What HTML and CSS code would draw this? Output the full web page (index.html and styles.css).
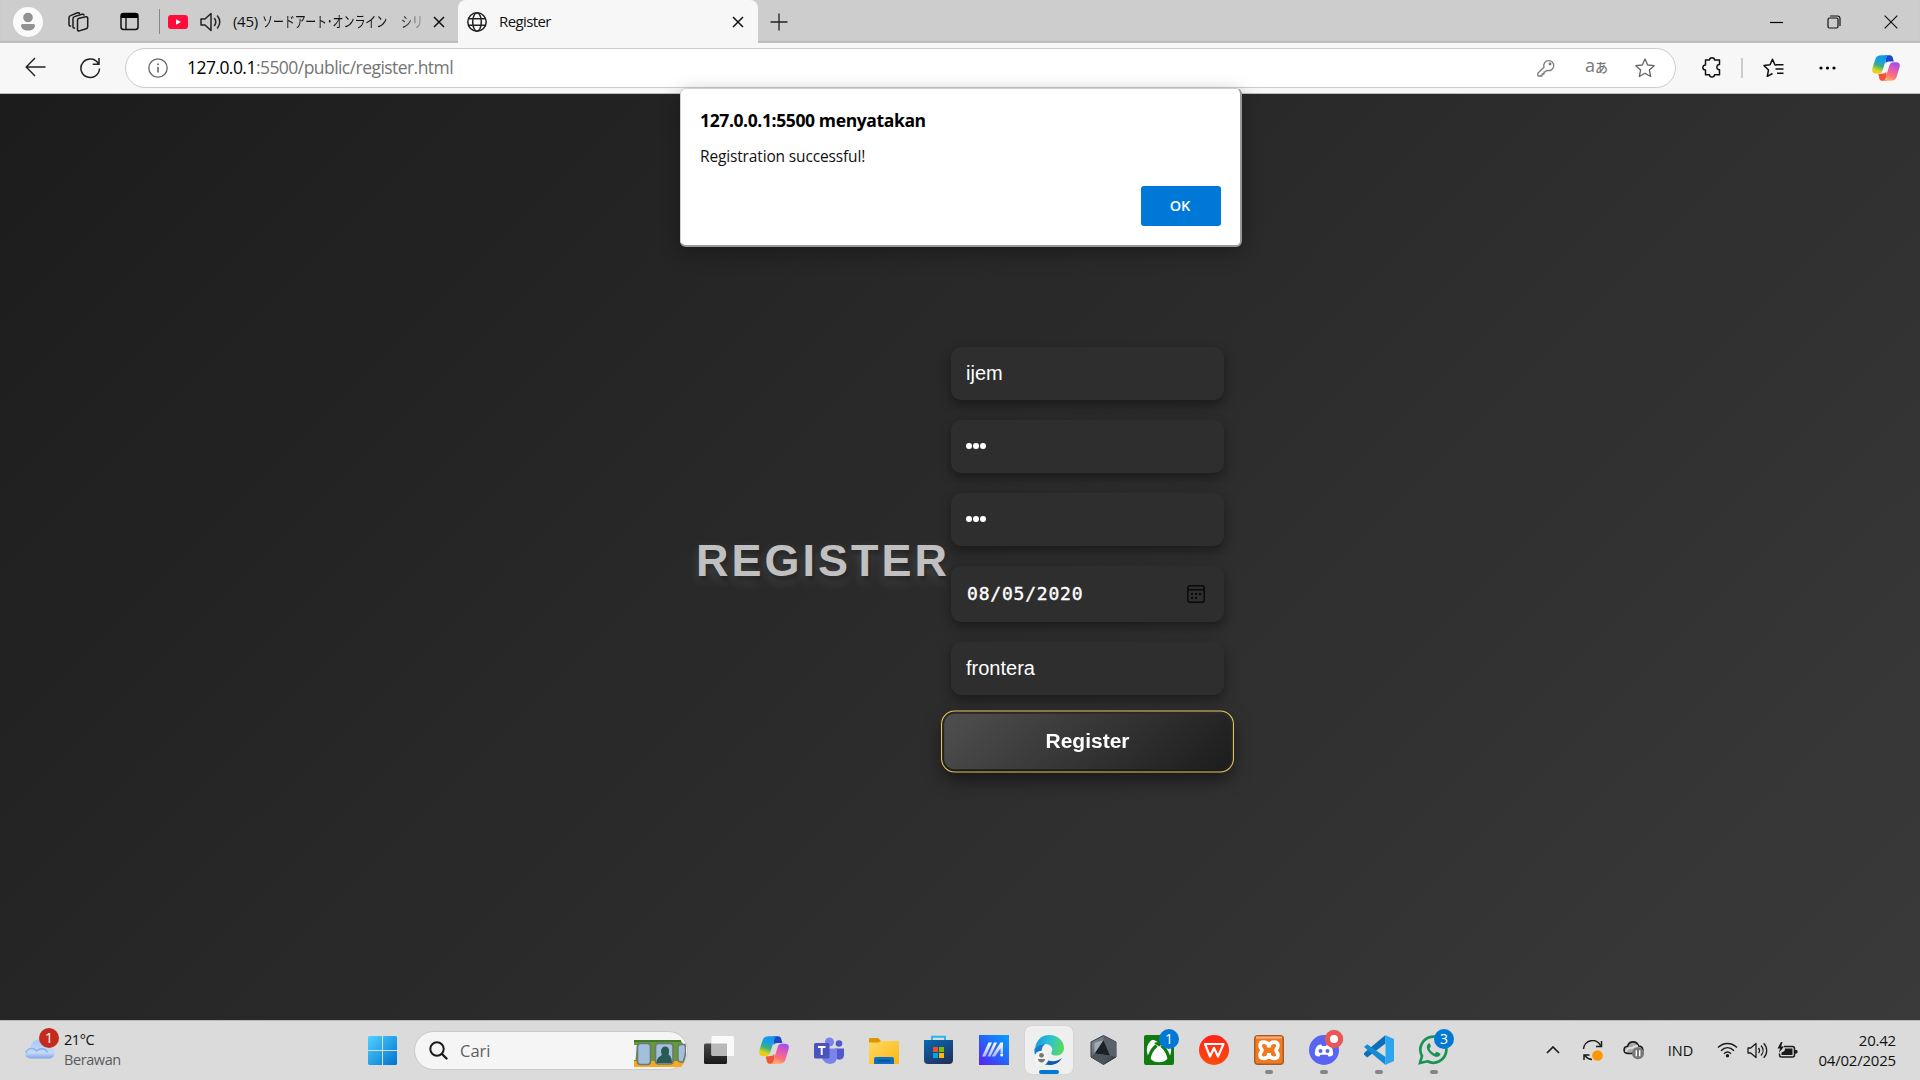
FILE: index.html
```html
<!DOCTYPE html>
<html lang="id">
<head>
<meta charset="utf-8">
<title>Register</title>
<link rel="stylesheet" href="styles.css">
</head>
<body>
<svg width="0" height="0" class="defs" aria-hidden="true">
  <defs>
    <linearGradient id="cpA" x1=".6" y1="0" x2=".3" y2="1"><stop offset="0" stop-color="#1594ea"/><stop offset=".3" stop-color="#12a0e8"/><stop offset=".58" stop-color="#3fb07a"/><stop offset=".85" stop-color="#d9d422"/><stop offset="1" stop-color="#fbc60e"/></linearGradient>
    <linearGradient id="cpB" x1=".7" y1="0" x2=".35" y2="1"><stop offset="0" stop-color="#a04df0"/><stop offset=".4" stop-color="#e35bb0"/><stop offset=".7" stop-color="#fb6f7c"/><stop offset="1" stop-color="#ffb067"/></linearGradient>
    <linearGradient id="winG" x1="0" y1="0" x2="1" y2="1"><stop offset="0" stop-color="#4fd3ff"/><stop offset="1" stop-color="#0071d0"/></linearGradient>
    <symbol id="copilot" viewBox="0 0 30 28">
      <path d="M14 .3h5c1.800 0 2.700.8 3.200 2.500l1.200 4.200h-5.200c-2 0-3 .8-3.500 2.500z" fill="#1b48c8"/>
      <path d="M16 27.700h-5c-1.800 0-2.700-.8-3.200-2.500l-1-4.700 5-.5c2 0 3-.8 3.500-2.500z" fill="#f0523a"/>
      <path d="M10 .3h8.500c-1.700.2-2.400 1.200-3 3l-4 12.500c-1 3-2 4.200-5 4.200H3.800C.8 20-.5 17.500.4 14.300L3.500 4.500C4.500 1.500 6.500.3 10 .3z" fill="url(#cpA)"/>
      <path d="M20 27.700h-8.500c1.700-.2 2.400-1.200 3-3l4-13c1-3 2-3.900 5-3.900h2.700c3 0 4.300 2.200 3.400 5.400l-3.100 10.300c-1 3-3 4.200-6.500 4.200z" fill="url(#cpB)"/>
    </symbol>
    <symbol id="cross" viewBox="0 0 12 12"><path d="M1 1l10 10M11 1L1 11" fill="none" stroke="currentColor" stroke-width="1.500"/></symbol>
  </defs>
</svg>

<header class="tabstrip">
  <div class="slot avatar-slot"><svg width="30" height="30" viewBox="0 0 30 30"><circle cx="15" cy="15" r="15" fill="#fafafa"/><circle cx="15" cy="10.500" r="4.800" fill="#929292"/><path d="M8 18.500c0-1 .8-1.500 1.800-1.500h10.400c1 0 1.800.5 1.800 1.500 0 3-3 5-7 5s-7-2-7-5z" fill="#929292"/></svg></div>
  <div class="slot collections"><svg width="22" height="22" viewBox="0 0 22 22" fill="none" stroke="#1b1b1b" stroke-width="1.500" stroke-linejoin="round" stroke-linecap="round"><path d="M10.500 9.200c0-1 .5-1.600 1.500-1.900l7-1.500c1.200-.2 1.700.5 1.700 1.500v8.500c0 1-.5 1.600-1.500 1.900l-7 2.200c-1.200.3-1.700-.5-1.700-1.500z"/><path d="M7.500 17c-1 .2-1.500-.5-1.500-1.500V7.500c0-1 .5-1.600 1.500-1.900L15 3.300c1-.3 1.800 0 2 .8M3.700 15c-1 .2-1.700-.5-1.700-1.500v-7c0-1 .5-1.600 1.500-1.900L10.500 1.800c1-.3 1.800 0 2 .6"/></svg></div>
  <div class="slot workspace"><svg width="19" height="19" viewBox="0 0 19 19"><rect x="1" y="1.500" width="17" height="16" rx="2.500" fill="none" stroke="#111" stroke-width="1.500"/><path d="M1 6V3.500C1 2 2 1 3.500 1h12C17 1 18 2 18 3.500V6z" fill="#000"/><path d="M6 6v11" stroke="#111" stroke-width="1.400"/></svg></div>
  <span class="strip-divider"></span>
  <div class="tab tab-video">
    <svg class="yt" width="20" height="14" viewBox="0 0 20 14"><rect width="20" height="14" rx="3" fill="#ff0c3a"/><path d="M8 4.200v5.600L13 7z" fill="#fff"/></svg>
    <svg class="snd" width="22" height="20" viewBox="0 0 22 20" fill="none" stroke="#222" stroke-width="1.500" stroke-linejoin="round" stroke-linecap="round"><path d="M1 7v6h4l6 5.500v-17L5 7zM14.500 6.500c1.500 2 1.500 5 0 7M17.500 4c3 3.500 3 8.500 0 12"/></svg>
    <span class="tab-title count">(45)</span>
    <span class="tab-title kana">ソードアート･オンライン</span>
    <span class="tab-title kana kana-fade">シリ</span>
    <svg class="tab-close" width="12" height="12"><use href="#cross"/></svg>
  </div>
  <div class="tab tab-active">
    <svg width="20" height="20" viewBox="0 0 20 20" fill="none" stroke="#222" stroke-width="1.500"><circle cx="10" cy="10" r="9.200"/><ellipse cx="10" cy="10" rx="4.300" ry="9.200"/><path d="M1.500 6.700h17M1.500 13.300h17"/></svg>
    <span class="tab-title">Register</span>
    <svg class="tab-close" width="12" height="12"><use href="#cross"/></svg>
  </div>
  <svg class="newtab" width="18" height="18" viewBox="0 0 18 18" stroke="#222" stroke-width="1.300"><path d="M9 .5v17M.5 9h17"/></svg>
  <div class="window-buttons">
    <svg width="13" height="14" viewBox="0 0 13 14"><path d="M0 7.500h13" stroke="#000" stroke-width="1.200"/></svg>
    <svg width="14" height="14" viewBox="0 0 14 14" fill="none" stroke="#111" stroke-width="1.200"><rect x="1" y="3" width="10" height="10" rx="1.500"/><path d="M3 1h7.500A2.500 2.500 0 0 1 13 3.500V11"/></svg>
    <svg width="14" height="14" viewBox="0 0 14 14"><path d="M.7.7l12.600 12.600M13.300.7L.7 13.300" stroke="#111" stroke-width="1.200"/></svg>
  </div>
</header>

<nav class="toolbar">
  <svg class="back" width="21" height="20" viewBox="0 0 21 20" fill="none" stroke="#222" stroke-width="1.400"><path d="M10 1L1.200 10l8.800 9M1.200 10H20.500"/></svg>
  <svg class="reload" width="22" height="22" viewBox="0 0 22 22" fill="none" stroke="#222" stroke-width="1.500"><path d="M19.500 7A9.300 9.300 0 1 0 20.500 11.500M20 1v6.300h-6.300"/></svg>
  <div class="address">
    <svg class="info" width="20" height="20" viewBox="0 0 20 20" fill="none" stroke="#666" stroke-width="1.300"><circle cx="10" cy="10" r="9.200"/><path d="M10 9v5.500M10 5.500v1.700" stroke-width="1.600"/></svg>
    <span class="url"><b>127.0.0.1</b>:5500/public/register.html</span>
    <svg class="key" width="18" height="18" viewBox="0 0 18 18" fill="none" stroke="#7a7a7a" stroke-width="1.300" stroke-linejoin="round"><path d="M7 8.200A5 5 0 1 1 10 11.300l-1.500 1.500H7V15H5v2H1.500C.8 17 .8 16.500.8 16v-1.800z"/><circle cx="13" cy="5" r=".8" fill="#7a7a7a"/></svg>
    <span class="translate"><span>a</span><small>あ</small></span>
    <svg class="star" width="20" height="20" viewBox="0 0 20 20" fill="none" stroke="#666" stroke-width="1.300" stroke-linejoin="round"><path d="M10 1l2.700 6 6.500.7-4.800 4.400 1.300 6.400L10 15.300l-5.700 3.200 1.300-6.400L.8 7.700 7.300 7z"/></svg>
  </div>
  <svg class="ext" width="20" height="21" viewBox="0 0 20 21" fill="none" stroke="#111" stroke-width="1.500" stroke-linejoin="round"><path d="M7.500 3c0-3 5-3 5 0h5v4.500c-3.500-.3-3.500 5.500 0 5.200v5h-5c0 3-5 3-5 0h-4v-4.700c-3.500 0-3.500-5 0-5V3z"/></svg>
  <span class="bar-divider"></span>
  <svg class="favs" width="21" height="20" viewBox="0 0 21 20" fill="none" stroke="#111" stroke-width="1.500" stroke-linejoin="round"><path d="M13.500 7l-1.500 0L9.500 1.200 7 6.800l-6 .8L5.500 12l-1.200 6.300 5.200-2.800M13 6.800h7.500M12.500 11h8M14 15.300h6.500"/></svg>
  <svg class="dots" width="17" height="4" viewBox="0 0 17 4"><circle cx="2" cy="2" r="1.600"/><circle cx="8.500" cy="2" r="1.600"/><circle cx="15" cy="2" r="1.600"/></svg>
  <svg class="copilot-top" width="28" height="26"><use href="#copilot"/></svg>
</nav>

<main class="page">
  <h1 class="heading">REGISTER</h1>
  <form class="form">
    <div class="field">ijem</div>
    <div class="field dots-field"><i></i><i></i><i></i></div>
    <div class="field dots-field"><i></i><i></i><i></i></div>
    <div class="field date-field"><span>08/05/2020</span>
      <svg width="18" height="18" viewBox="0 0 18 18"><rect x=".8" y=".8" width="16.400" height="16.400" rx="2.200" fill="none" stroke="#080808" stroke-width="1.400"/><path d="M1 4.800h16" stroke="#080808" stroke-width="1.400"/><path d="M4 8h2v2H4zM8 8h2v2H8zM12 8h2v2h-2zM4 12h2v2H4zM8 12h2v2H8z" fill="#080808"/></svg>
    </div>
    <div class="field">frontera</div>
    <button type="button" class="submit">Register</button>
  </form>
</main>

<div class="dialog">
  <p class="dialog-title">127.0.0.1:5500 menyatakan</p>
  <p class="dialog-text">Registration successful!</p>
  <button type="button" class="ok">OK</button>
</div>

<footer class="taskbar">
  <div class="weather">
    <div class="cloud">
      <svg width="30" height="20" viewBox="0 0 30 20"><defs><linearGradient id="cl" x1="0" y1="0" x2="0" y2="1"><stop offset="0" stop-color="#a9c6f6"/><stop offset=".7" stop-color="#c6daf8"/><stop offset="1" stop-color="#7fa5e6"/></linearGradient></defs><path d="M6 19.500c-7.500 0-8-9.500-.5-10C6-1.500 20-3 22 6c9 0 10.500 13.500 2 13.500z" fill="url(#cl)"/><path d="M1 14c1-5 8-6 10.500-2 4-3.500 9-3 11 1.500" fill="none" stroke="#8bb0ef" stroke-width="1.500"/></svg>
      <span class="badge red">1</span>
    </div>
    <div class="weather-text"><span>21°C</span><span class="muted">Berawan</span></div>
  </div>
  <svg class="start" width="29" height="29" viewBox="0 0 29 29"><path d="M1 0h13v14H0V1zM15 0h13l1 1v13H15zM0 15h14v14H1l-1-1zM15 15h14v13l-1 1H15z" fill="url(#winG)"/></svg>
  <div class="search">
    <svg width="19" height="19" viewBox="0 0 19 19" fill="none" stroke="#1b1b1b" stroke-width="2" stroke-linecap="round"><circle cx="8" cy="8" r="6.700"/><path d="M13 13l4.500 4.500" stroke-width="2.400"/></svg>
    <span>Cari</span>
    <svg class="art" width="52" height="27" viewBox="0 0 52 27">
      <path d="M0 0h46c3 3 5.500 7 5.500 13S49 24 46 27H0z" fill="#659b32"/><path d="M0 1h47" stroke="#3f7c2a" stroke-width="2"/><path d="M0 21h51l-4 6H0z" fill="#f6a821"/><path d="M0 5h3L1.500 20H0z" fill="#eef2f4"/>
      <rect x="3.500" y="3.500" width="13" height="21" rx="3" fill="#a2bfdc" stroke="#6f7478" stroke-width="1.600"/><rect x="21.500" y="3.500" width="17.500" height="20.500" rx="3" fill="#a2bfdc" stroke="#6f7478" stroke-width="1.600"/><path d="M51 4.500h-4c-2 0-3 1-3 3V19c0 2 1 3 3 3h2c3-6 3-12 2-17.500z" fill="#a2bfdc" stroke="#6f7478" stroke-width="1.400"/>
      <path d="M22.500 23c0-4 2-6 5.500-8-2-4-.5-8.500 3-8.500s5 3 3.500 8c2.500 1.500 3.500 5 3.500 8.500z" fill="#285b55"/>
    </svg>
  </div>
  <div class="apps">
    <div class="app"><svg width="30" height="28" viewBox="0 0 30 28"><defs><linearGradient id="tv" x1="0" y1="0" x2="0" y2="1"><stop offset="0" stop-color="#4a4a4a"/><stop offset="1" stop-color="#191919"/></linearGradient></defs><rect y="7.500" width="23" height="20.500" rx="1.500" fill="url(#tv)"/><rect x="7.500" width="22.500" height="20" rx="1.500" fill="#fafafa"/><path d="M7.500 7.500H23V20H9q-1.500 0-1.500-1.500z" fill="#b9b9b9"/></svg></div>
    <div class="app"><svg width="30" height="28"><use href="#copilot"/></svg></div>
    <div class="app"><svg width="30" height="27" viewBox="0 0 30 27"><circle cx="15.500" cy="5" r="4.500" fill="#7b83eb"/><circle cx="25" cy="6.500" r="3.300" fill="#5059c9"/><path d="M21 11.500h9V18c0 6-8 6-9 1z" fill="#5059c9"/><path d="M8 11.500h15V20c0 8.500-12 9.500-15 1z" fill="#7b83eb"/><rect y="6" width="15.500" height="15.500" rx="1.500" fill="#4b53bc"/><path d="M4 10h7.500M7.700 10v8" stroke="#fff" stroke-width="1.900"/></svg></div>
    <div class="app"><svg width="30" height="27" viewBox="0 0 30 27"><defs><linearGradient id="fo" x1="0" y1="0" x2="1" y2="1"><stop offset="0" stop-color="#ffd766"/><stop offset="1" stop-color="#fdb90f"/></linearGradient></defs><path d="M0 10V2Q0 1 1.200 1h8L12 4v5z" fill="#dc9700"/><path d="M0 5.500h9.500L12 4h17q1 0 1 1v21q0 1-1 1H1q-1 0-1-1z" fill="url(#fo)"/><path d="M5 27v-5q0-2 2-2h16q2 0 2 2v5z" fill="#0b6fc4"/><path d="M8.500 23.700h13" stroke="#084d8c" stroke-width="1.600"/></svg></div>
    <div class="app"><svg width="29" height="30" viewBox="0 0 29 30"><defs><linearGradient id="st" x1="0" y1="0" x2=".6" y2="1"><stop offset="0" stop-color="#0767b5"/><stop offset="1" stop-color="#1f3561"/></linearGradient></defs><path d="M8 6V1.800h13V6" fill="none" stroke="#29b4f0" stroke-width="1.900"/><path d="M0 5h29v20q0 4-4 4H4q-4 0-4-4z" fill="url(#st)"/><path fill="#f25022" d="M9 12h5v5H9z"/><path fill="#7fba00" d="M15 12h5v5h-5z"/><path fill="#00a4ef" d="M9 18h5v5H9z"/><path fill="#ffb900" d="M15 18h5v5h-5z"/></svg></div>
    <div class="app"><svg width="30" height="30" viewBox="0 0 30 30"><defs><linearGradient id="my" x1="1" y1="0" x2="0" y2="1"><stop offset="0" stop-color="#06a0ff"/><stop offset=".5" stop-color="#2563fb"/><stop offset="1" stop-color="#5c1ff2"/></linearGradient><linearGradient id="mw" x1="0" y1="0" x2="0" y2="1"><stop offset="0" stop-color="#fff"/><stop offset="1" stop-color="#a9b4f6"/></linearGradient></defs><path d="M0 0h30v30H0z" fill="url(#my)"/><path d="M3 21.500L9.500 7.500H13L6.500 21.500zM8.500 21.500L15 7.500h3L11.500 21.500zM12.500 21.500L21.500 7.500h2.500v11h-2.500v-5l-5.500 8z" fill="url(#mw)"/><circle cx="22.700" cy="20" r="1.500" fill="#fff"/></svg></div>
    <div class="app current"><svg width="30" height="31" viewBox="0 0 30 31"><defs><linearGradient id="ea" x1="0" y1=".3" x2="1" y2=".5"><stop offset="0" stop-color="#129bdc"/><stop offset=".5" stop-color="#2bc3d2"/><stop offset="1" stop-color="#5bdb57"/></linearGradient><linearGradient id="eb" x1="0" y1="0" x2="1" y2="1"><stop offset="0" stop-color="#1389d8"/><stop offset="1" stop-color="#0b4f9d"/></linearGradient></defs><path d="M1 13C3 4 8 0 15 0c9 0 15 6 15 13 0 5-3.500 7.500-8 7.500-3.500 0-5.500-1.500-4.500-3 2.500-4-1-8.500-6-8.500C7 9 3 10.500 1 13z" fill="url(#ea)"/><path d="M.5 14C3 10 7 9 11 9c-4 3-4.500 9-1 13 4 5 11 6 18 1-2.500 4.500-7 7-12.500 7C5.500 30-.5 22.500.5 14z" fill="url(#eb)"/><circle cx="7.500" cy="23" r="7.300" fill="#f3f3f3"/><circle cx="7.500" cy="20.300" r="2.400" fill="#777"/><path d="M4 24h7c0 4.500-7 4.500-7 0z" fill="#777"/></svg></div>
    <div class="app"><svg width="27" height="30" viewBox="0 0 27 30"><defs><linearGradient id="hx" x1="0" y1="0" x2="1" y2="1"><stop offset="0" stop-color="#8a949e"/><stop offset="1" stop-color="#30353a"/></linearGradient></defs><path d="M13.500.5L26 7v15l-12.500 7.500L1 22V7z" fill="url(#hx)" stroke="#34383c"/><path d="M13.500 5L20 20.500 4.500 18.500z" fill="#1d2024"/><path d="M13.500 5L4.500 18.500V8z" fill="#a0abb7"/><path d="M13.500 1l.5 5L20 20.500 26 22V7z" fill="#59626c"/><path d="M1 22l3.500-3.500L20 20.500l-6.500 9z" fill="#4d545c"/></svg></div>
    <div class="app"><svg width="30" height="30" viewBox="0 0 30 30"><rect width="30" height="30" rx="2" fill="#107c10"/><circle cx="15" cy="15" r="12.200" fill="#fff"/><path d="M6.500 5C9 4 12.500 6 15 8 17.500 6 21 4 23.500 5L22 1H8z" fill="#107c10"/><path d="M12.500 10.500C8.500 14 5.500 19 4.800 24.500M17.500 10.500C21.500 14 24.500 19 25.200 24.500" fill="none" stroke="#107c10" stroke-width="3.200"/><path d="M10 8l5 3.500L20 8l-5-1.500z" fill="#107c10"/></svg><span class="badge blue">1</span></div>
    <div class="app"><svg width="30" height="30" viewBox="0 0 30 30"><defs><linearGradient id="wp" x1="0" y1="0" x2="0" y2="1"><stop offset="0" stop-color="#ff2219"/><stop offset="1" stop-color="#ff4c0c"/></linearGradient></defs><circle cx="15" cy="15" r="15" fill="url(#wp)"/><path d="M12 9H6l5 12.500L15 13l4 8.500L24.500 9H11" fill="none" stroke="#fff" stroke-width="2.200" stroke-linejoin="round"/></svg></div>
    <div class="app running"><svg width="30" height="30" viewBox="0 0 30 30"><rect x=".7" y=".7" width="28.600" height="28.600" rx="3" fill="#ef7a22" stroke="#a85a22" stroke-width="1.400"/><path d="M2 2.500h26" stroke="#f8b17f" stroke-width="2"/><path d="M15 10.500C13 6 6 6 6 10.500c0 2.500 2 3.300 2 4.700s-2 2.300-2 4.800c0 4.500 7 4.500 9 0 2 4.500 9 4.500 9 0 0-2.500-2-3.400-2-4.800s2-2.200 2-4.700c0-4.500-7-4.500-9 0z" fill="none" stroke="#fff" stroke-width="3.600" stroke-linejoin="round"/><path d="M15 9v3.500M15 18v3.500" stroke="#fff" stroke-width="4"/></svg></div>
    <div class="app running"><svg width="30" height="30" viewBox="0 0 30 30"><circle cx="15" cy="15" r="15" fill="#5865f2"/><path d="M6 20c-.5-4 1-8 2.800-9.500 1.500-1 3-1.300 3.500-1l.7 1.500h4l.7-1.500c.5-.3 2 0 3.500 1C23 12 24.500 16 24 20c-1.500 1.200-3 1.700-4.500 1.500l-1-1.800h-7l-1 1.800C9 21.700 7.500 21.200 6 20z" fill="#fff"/><circle cx="11.500" cy="16" r="2" fill="#5865f2"/><circle cx="18.500" cy="16" r="2" fill="#5865f2"/></svg><span class="badge rec"></span></div>
    <div class="app running"><svg width="30" height="30" viewBox="0 0 30 30"><path d="M21.500 0v8.500L3.200 22.500 0 19.500 0 18z" fill="#0c6fb8"/><path d="M0 12l3.200-2.700L21.500 22v8L0 12z" fill="#158bd7"/><path d="M21.500.3L30 4v22l-8.500 3.700z" fill="#2ba5ee"/></svg></div>
    <div class="app running"><svg width="31" height="30" viewBox="0 0 31 30"><path d="M2 28l2-7A13 13 0 1 1 9.500 26.300z" fill="none" stroke="#199256" stroke-width="2.700"/><path d="M11 8c-4 3-2 7.500 1.500 10.700C16.500 22.300 20.500 23 22.500 19.500c.4-1-3.500-3-4.300-2.500l-1.500 1.700c-2.500-1-4.300-2.900-5.200-5.200l1.300-1.700c.4-.8-.8-3.700-1.800-3.800z" fill="#199256"/></svg><span class="badge blue">3</span></div>
  </div>
  <div class="tray">
    <div class="tray-slot"><svg width="14" height="8" viewBox="0 0 14 8"><path d="M1 7l6-6 6 6" fill="none" stroke="#1b1b1b" stroke-width="1.700"/></svg></div>
    <div class="tray-slot"><svg width="22" height="21" viewBox="0 0 22 21" fill="none" stroke="#1b1b1b" stroke-width="1.500"><path d="M1.500 9A9 9 0 0 1 18.500 5.500M19.500 1v5.500H14M2 20v-5h5.500M3 15.500a9 9 0 0 0 7 4"/><circle cx="15.500" cy="15.500" r="5.300" fill="#ff9800" stroke="none"/></svg></div>
    <div class="tray-slot"><svg width="21" height="20" viewBox="0 0 21 20"><path d="M5.500 13.500c-6 0-5.500-7-.8-7.300C6 .5 14 .5 15.500 6c5 0 6 6.500 1 7.500z" fill="#a9a9a9" stroke="#1b1b1b" stroke-width="1.600"/><path d="M3 12c0-3 3-4.500 6-4 2-2 4-2 6-2" stroke="#ddd" stroke-width="2" fill="none"/><circle cx="15" cy="13.300" r="6" fill="#777"/><path d="M13.300 10.300v6M16.700 10.300v6" stroke="#fff" stroke-width="1.400"/></svg></div>
    <span class="lang">IND</span>
    <div class="status">
      <svg width="21" height="16" viewBox="0 0 21 16" fill="none" stroke="#1b1b1b" stroke-width="1.500"><path d="M1 5.500c5.500-5.500 13.500-5.500 19 0M4 8.700c4-4 9-4 13 0M7 11.700c2.200-2.200 4.800-2.200 7 0"/><circle cx="10.500" cy="13.800" r="1.700" fill="#1b1b1b" stroke="none"/></svg>
      <svg width="21" height="17" viewBox="0 0 21 17" fill="none" stroke="#1b1b1b" stroke-width="1.300" stroke-linejoin="round"><path d="M1 6v5h2.700L9 15.500v-14L3.700 6zM11.500 6c1.300 1.500 1.300 3.500 0 5M14 3.500c2.700 3 2.700 7 0 10M16.700 1.200c4 4 4 10.600 0 14.600"/></svg>
      <svg width="21" height="17" viewBox="0 0 21 17"><path d="M7 4.500h8.500q2 0 2 2V13q0 2-2 2H4.500q-2 0-2-2v-1.500" fill="none" stroke="#1b1b1b" stroke-width="1.500"/><path d="M8 6.500h7.500V13h-11v-2.500L7.500 9zM18 8h1.500q1 0 1 1v1.500q0 1-1 1H18zM4 0L.5 6.500H3L2 11l5-6.500H4.200L5.500 0z" fill="#1b1b1b"/></svg>
    </div>
    <div class="clock"><span>20.42</span><span>04/02/2025</span></div>
  </div>
</footer>
</body>
</html>
```
FILE: styles.css
```css
* { box-sizing: border-box; }
html, body { margin: 0; height: 100%; }
body {
  display: flex;
  flex-direction: column;
  height: 1080px;
  overflow: hidden;
  position: relative;
  font-family: "Open Sans", "Noto Sans", "Noto Sans CJK JP", sans-serif;
  color: #111;
}
svg { display: block; flex: none; }
p { margin: 0; }
.defs { position: absolute; }

/* Tab strip */
.tabstrip {
  display: flex;
  align-items: center;
  height: 43px;
  flex: none;
  background: #cdcdcd;
  box-shadow: inset 0 -2px 1px #bdbdbd;
}
.slot { display: flex; justify-content: center; }
.avatar-slot { width: 56px; }
.collections { width: 43px; }
.workspace { width: 60px; padding-left: 1px; }
.strip-divider { width: 1px; height: 25px; background: #888; }
.tab { display: flex; align-items: center; height: 43px; }
.tab-title { padding-bottom: 2px; font-size: 15px; letter-spacing: -0.6px; white-space: nowrap; line-height: 24px; }
.tab-video { width: 298px; padding: 0 13px 0 8px; }
.snd { margin-left: 12px; }
.count { width: 29px; margin-left: 11px; letter-spacing: -0.3px; }
.kana {
  width: 142px;
  font-family: "Noto Sans CJK JP", sans-serif;
  letter-spacing: 0;
  transform: scaleX(.73);
  transform-origin: left;
}
.kana-fade {
  width: 32px;
  margin-left: -3px;
  -webkit-mask-image: linear-gradient(90deg, #000, rgba(0, 0, 0, .2));
  mask-image: linear-gradient(90deg, #000, rgba(0, 0, 0, .2));
}
.tab-close { margin-left: auto; }
.tab-active {
  width: 300px;
  padding: 0 14px 0 9px;
  border-radius: 8px 8px 0 0;
  background: #f7f7f7;
}
.tab-active .tab-title { margin-left: 12px; }
.newtab { margin-left: 12px; }
.window-buttons { display: flex; gap: 43.5px; margin-left: auto; margin-right: 22px; }

/* Toolbar */
.toolbar {
  display: flex;
  align-items: center;
  height: 51px;
  flex: none;
  padding: 0 20px 1px 25px;
  background: #f7f7f7;
  border-bottom: 1px solid #bdbdbd;
}
.back { margin-bottom: 1px; }
.reload { margin-left: 33px; }
.address {
  display: flex;
  align-items: center;
  width: 1551px;
  height: 40px;
  margin-left: 24px;
  padding: 0 20px 0 22px;
  border: 1px solid #cbcbcb;
  border-radius: 20px;
  background: #fff;
}
.url { margin-left: 19px; padding-bottom: 1px; font-size: 17.5px; letter-spacing: -0.55px; color: #757575; white-space: nowrap; }
.url b { font-weight: 400; color: #000; }
.key { margin-left: auto; }
.translate { display: flex; align-items: baseline; margin: 0 27px 3px 30px; color: #777; font-size: 18px; line-height: 20px; }
.translate small { font-size: 13px; font-weight: 500; }
.ext { margin-left: 26px; }
.bar-divider { width: 2px; height: 20px; margin-left: 19px; background: #ccc; }
.favs { margin-left: 20px; }
.dots { margin-left: 35px; }
.copilot-top { margin-left: auto; }

/* Page */
.page {
  display: flex;
  flex: none;
  justify-content: center;
  align-items: center;
  height: 926px;
  background: linear-gradient(135deg, #1c1c1c, #3a3a3a);
  font-family: "Liberation Sans", Arial, sans-serif;
  color: #fff;
}
.heading {
  margin: 0;
  padding-top: 7px;
  width: 255px;
  font-size: 45px;
  font-weight: 700;
  letter-spacing: 3px;
  color: #c0c0c0;
  text-shadow: 2px 4px 4px rgba(0, 0, 0, .3), 0 5px 12px rgba(255, 255, 255, .16);
}
.form { display: flex; flex-direction: column; gap: 20px; width: 273px; margin-bottom: -1px; }
.field {
  display: flex;
  align-items: center;
  height: 53px;
  padding: 0 15px;
  border-radius: 10px;
  background: #2e2e2e;
  box-shadow: 0 5px 12px rgba(0, 0, 0, .4);
  font-size: 20px;
}
.dots-field { gap: 1.5px; padding-bottom: 2px; }
.dots-field i { width: 5.6px; height: 6px; border-radius: 50%; background: #fff; }
.date-field {
  height: 56px;
  justify-content: space-between;
  padding-right: 19px;
  padding-left: 16px;
  font-family: "DejaVu Sans Mono", monospace;
  font-size: 18px;
  letter-spacing: .8px;
}
.date-field span { padding-bottom: 2px; -webkit-text-stroke: .4px #fff; }
.submit {
  height: 53px;
  padding: 0;
  border: 0;
  border-radius: 10px;
  background: linear-gradient(135deg, #4f4f4f, #1c1c1c);
  box-shadow: 0 8px 18px rgba(0, 0, 0, .6);
  outline: 1.5px solid #e8c85a;
  outline-offset: 2px;
  transform: scale(1.05);
  color: #fff;
  font: 700 20px "Liberation Sans", Arial, sans-serif;
}

/* Alert dialog lies over the page and toolbar */
.dialog {
  position: absolute;
  left: 680px;
  top: 88px;
  width: 562px;
  height: 159px;
  display: flex;
  flex-direction: column;
  padding: 18px 19px 0 19px;
  border: 1px solid #d0d0d0;
  border-right: 2px solid #999;
  border-bottom: 2px solid #999;
  border-radius: 6px;
  background: #fff;
  box-shadow: 0 6px 20px rgba(0, 0, 0, .3);
}
.dialog-title { font-size: 17.5px; font-weight: 700; line-height: 26px; letter-spacing: -0.38px; color: #000; }
.dialog-text { margin-top: 11px; font-size: 15.5px; line-height: 24px; letter-spacing: -0.15px; color: #111; }
.ok {
  align-self: flex-end;
  width: 80px;
  height: 40px;
  margin-top: 18px;
  padding: 0 2px 2px 0;
  border: 0;
  border-radius: 3px;
  background: #0078d7;
  color: #fff;
  font: 600 14.5px "Open Sans", sans-serif;
}

/* Taskbar */
.taskbar {
  display: flex;
  align-items: center;
  height: 60px;
  flex: none;
  padding-bottom: 1px;
  border-top: 1px solid #b9b9b9;
  background: #dbdbdb;
}
.weather { display: flex; width: 368px; padding-left: 25px; }
.cloud { position: relative; width: 39px; padding-top: 9px; }
.badge {
  position: absolute;
  width: 20px;
  height: 20px;
  border-radius: 50%;
  color: #fff;
  font-size: 14px;
  line-height: 20px;
  text-align: center;
}
.red { left: 14px; top: -2px; background: #c42b1c; }
.blue { right: 7px; top: 3px; background: #0078d4; }
.rec { right: 8px; top: 4px; width: 18px; height: 18px; border: 5px solid #ee5555; background: #fff; box-shadow: 0 0 1px #777; }
.weather-text { display: flex; flex-direction: column; font-size: 14.5px; line-height: 20px; letter-spacing: -0.42px; }
.muted { color: #5a5a5a; }
.search {
  display: flex;
  align-items: center;
  width: 274px;
  height: 39px;
  margin-left: 17px;
  padding-left: 14px;
  border: 1px solid #c9c9c9;
  border-radius: 20px;
  background: #f5f5f5;
  color: #5f5f5f;
  font-size: 16.5px;
}
.search span { margin-left: 12px; }
.art { margin: 6px 1px 0 auto; }
.apps { display: flex; margin-left: 3px; }
.app {
  position: relative;
  display: flex;
  align-items: center;
  justify-content: center;
  width: 55px;
  height: 48px;
}
.current { width: 48px; margin: 0 3.5px; border-radius: 6px; background: #efefef; box-shadow: 0 0 1px #aaa; }
.running::after, .current::after {
  content: "";
  position: absolute;
  bottom: 0;
  left: calc(50% - 4px);
  width: 8px;
  height: 4px;
  border-radius: 2px;
  background: #858585;
}
.current::after { left: 14px; width: 20px; background: #0078d4; }
.tray { display: flex; align-items: center; margin-left: auto; padding-right: 24px; }
.tray-slot { display: flex; justify-content: center; width: 40px; }
.lang { width: 55px; text-align: center; font-size: 14.5px; }
.status { display: flex; align-items: center; gap: 9px; margin-left: 9px; }
.clock { display: flex; flex-direction: column; align-items: flex-end; width: 98px; font-size: 15px; line-height: 20px; letter-spacing: -0.2px; }
```
